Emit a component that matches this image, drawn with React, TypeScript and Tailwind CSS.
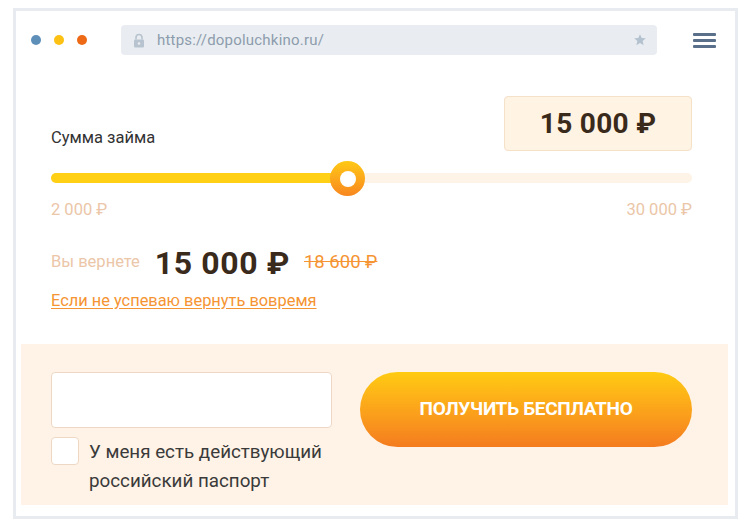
import React from "react";

export default function App() {
  return (
    <div className="w-[751px] h-[519px] bg-white pt-[8px] pl-[13px] overflow-hidden" style={{ fontFamily: "Roboto, 'Liberation Sans', sans-serif" }}>
      <div className="w-[725px] h-[511px] border-[3px] border-[#e8ebef] bg-white flex flex-col">
        {/* header */}
        <div className="flex items-center h-[30px] mt-[14px] pl-[15px] pr-[19px]">
          <div className="flex items-center gap-[13px]">
            <span className="w-[10px] h-[10px] rounded-full bg-[#5e8fb9]" />
            <span className="w-[10px] h-[10px] rounded-full bg-[#fdc113]" />
            <span className="w-[10px] h-[10px] rounded-full bg-[#ee6916]" />
          </div>
          <div className="ml-[34px] w-[536px] h-[30px] rounded-[4px] bg-[#e9edf1] flex items-center pl-[12px] pr-[10px]">
            <svg width="12" height="15" viewBox="0 0 12 15" className="shrink-0">
              <path d="M3 6.5V4.5a3 3 0 0 1 6 0v2" fill="none" stroke="#b7c3cf" strokeWidth="1.6" />
              <rect x="1" y="6.5" width="10" height="8" rx="1" fill="#b7c3cf" />
              <circle cx="6" cy="10.5" r="1.3" fill="#e9edf1" />
            </svg>
            <span className="ml-[12px] text-[15px] text-[#8d9cad] tracking-[0.2px]">https://dopoluchkino.ru/</span>
            <svg width="14" height="14" viewBox="0 0 24 24" className="ml-auto">
              <path d="M12 2l2.9 6.6 7.1.6-5.4 4.7 1.6 7-6.2-3.7-6.2 3.7 1.6-7L2 9.2l7.1-.6z" fill="#b4c2d0" />
            </svg>
          </div>
          <div className="ml-auto flex flex-col gap-[3px] w-[23px]">
            <span className="h-[3px] bg-[#5a6f89] rounded-[1px]" />
            <span className="h-[3px] bg-[#5a6f89] rounded-[1px]" />
            <span className="h-[3px] bg-[#5a6f89] rounded-[1px]" />
          </div>
        </div>

        {/* main */}
        <div className="pl-[35px] pr-[43px] mt-[41px]">
          <div className="flex items-end justify-between">
            <span className="text-[16.5px] text-[#333333]">Сумма займа</span>
            <div className="w-[188px] h-[55px] rounded-[4px] bg-[#fff3e3] border border-[#f5e0c8] flex items-center justify-center">
              <span className="text-[28px] font-bold text-[#3a2a1b] tracking-[0.3px]">15 000 ₽</span>
            </div>
          </div>
          <div className="relative mt-[22px] h-[10px] rounded-full bg-[#fdf3e6]">
            <div className="absolute left-0 top-0 h-[10px] w-[297px] rounded-full bg-[#ffd015]" />
            <div className="absolute left-[279px] top-[-12px] w-[35px] h-[35px] rounded-full bg-gradient-to-b from-[#ffc913] to-[#f7861f] flex items-center justify-center">
              <div className="w-[16px] h-[16px] rounded-full bg-white" />
            </div>
          </div>
          <div className="flex justify-between mt-[15px] text-[16.5px] text-[#ebc6a8]">
            <span>2 000 ₽</span>
            <span>30 000 ₽</span>
          </div>
          <div className="flex items-center mt-[24px]">
            <span className="text-[16.5px] text-[#ebc6a8]">Вы вернете</span>
            <span className="ml-[15px] text-[32px] font-bold text-[#3a2a1b] tracking-[0.6px] leading-none">15 000 ₽</span>
            <span className="ml-[14px] text-[18.5px] text-[#f59433] line-through">18 600 ₽</span>
          </div>
          <a className="block mt-[10px] text-[16.4px] text-[#f59433] underline underline-offset-[2px]">Если не успеваю вернуть вовремя</a>
        </div>

        {/* bottom panel */}
        <div className="mt-auto mb-[11px] ml-[5px] mr-[7px] h-[161px] bg-[#fef3e6] flex pt-[28px] pl-[30px] pr-[36px]">
          <div className="w-[281px]">
            <div className="h-[56px] bg-white border border-[#efd8c3] rounded-[4px]" />
            <div className="flex mt-[9px]">
              <div className="w-[28px] h-[28px] shrink-0 bg-white border border-[#efd8c3] rounded-[4px]" />
              <div className="ml-[10px] mt-[1px] text-[18.8px] leading-[29px] text-[#3a3a3a] whitespace-nowrap">
                У меня есть действующий<br />российский паспорт
              </div>
            </div>
          </div>
          <div className="ml-auto w-[332px] h-[75px] rounded-full bg-gradient-to-b from-[#ffcb11] to-[#f47b1f] flex items-center justify-center">
            <span className="text-[19px] font-bold text-white uppercase tracking-[-0.3px]">Получить бесплатно</span>
          </div>
        </div>
      </div>
    </div>
  );
}
